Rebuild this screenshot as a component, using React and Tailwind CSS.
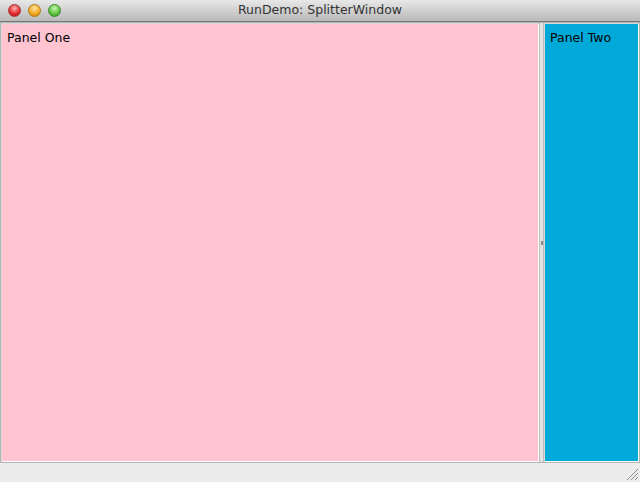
export default function App() {
  return (
    <div
      className="flex flex-col w-[640px] h-[482px] bg-[#ececec] overflow-hidden"
      style={{ fontFamily: '"Lucida Grande", "DejaVu Sans", "Liberation Sans", sans-serif' }}
    >
      <div className="relative flex items-center justify-center h-[22px] shrink-0 bg-gradient-to-b from-[#e8e8e8] to-[#b9b9b9] border-b border-[#777]">
        <div className="absolute left-[8px] top-[4px] flex gap-[7px]">
          <span className="w-[13px] h-[13px] rounded-full border border-[#a33] bg-[radial-gradient(circle_at_50%_30%,#ffb3b3,#e0262b_60%,#b3161b)]" />
          <span className="w-[13px] h-[13px] rounded-full border border-[#b07a10] bg-[radial-gradient(circle_at_50%_30%,#ffe3a0,#f2a821_60%,#c47b0a)]" />
          <span className="w-[13px] h-[13px] rounded-full border border-[#3d8a2a] bg-[radial-gradient(circle_at_50%_30%,#c6f5b0,#5cc23d_60%,#2f8a1d)]" />
        </div>
        <span className="text-[12.5px] text-[#333]">RunDemo: SplitterWindow</span>
      </div>
      <div className="flex h-[440px] shrink-0 bg-[#b4b4b4] pl-[1px] pt-[1px] pr-[1px]">
        <div className="w-[538px] border-l border-t border-[#d8d8d8] bg-white pr-[1px] pb-[1px] flex">
          <div className="flex-1 bg-[#ffc4d0] px-[5px] py-[8px] text-[12.5px] text-black leading-none">Panel One</div>
        </div>
        <div className="relative w-[5px] bg-[#e2e2e2] border-x border-[#bcbcbc]">
          <span className="absolute left-[1px] top-[218px] w-[2px] h-[4px] bg-[#888]" />
        </div>
        <div className="flex-1 border-l border-t border-[#d8d8d8] bg-white pr-[1px] pb-[1px] flex">
          <div className="flex-1 bg-[#00a9d8] px-[5px] py-[8px] text-[12.5px] text-black leading-none">Panel Two</div>
        </div>
      </div>
      <div className="relative flex-1 border-t border-[#b4b4b4] bg-[#ececec]">
        <svg className="absolute right-[1px] bottom-[1px]" width="13" height="13" viewBox="0 0 13 13">
          <path d="M12 1 L1 12 M12 5 L5 12 M12 9 L9 12" stroke="#8a8a8a" strokeWidth="1" />
        </svg>
      </div>
    </div>
  );
}
